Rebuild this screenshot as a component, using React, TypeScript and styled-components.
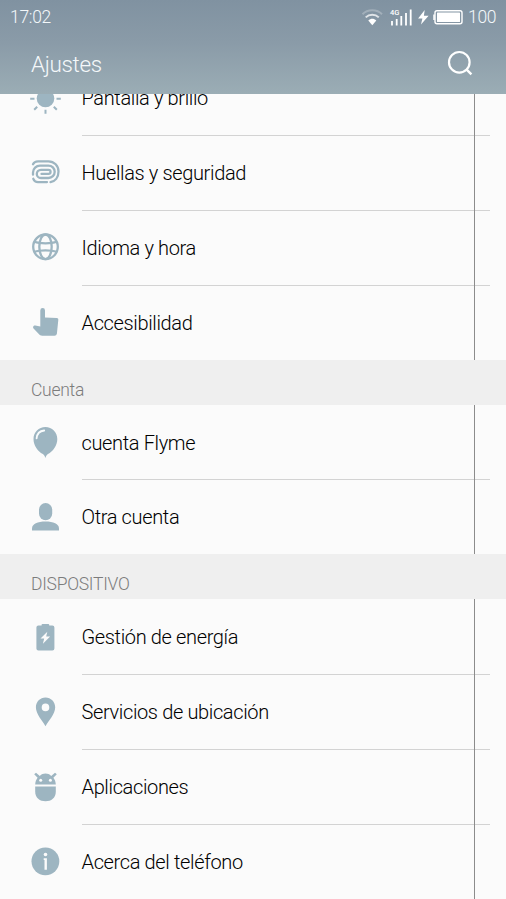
import React from "react";
import styled, { createGlobalStyle } from "styled-components";

const TINT = "#9db5c1";
const PAPER = "#fbfbfb";

const GlobalStyle = createGlobalStyle`
  * { box-sizing: border-box; }
  body { margin: 0; background: ${PAPER}; font-family: Roboto, "Liberation Sans", sans-serif; }
`;

const Screen = styled.div`
  display: flex;
  flex-direction: column;
  height: 899px;
  overflow: hidden;
  background: ${PAPER};
`;

const Header = styled.header`
  flex: none;
  height: 94px;
  color: #f4f8fa;
  background: linear-gradient(#8092a1, #8a9ba8 45%, #9badb5);
`;

const StatusBar = styled.div`
  display: flex;
  align-items: center;
  justify-content: space-between;
  height: 34px;
  padding: 0 10px;
  font-size: 17.5px;
  font-weight: 300;
  letter-spacing: -0.3px;
`;

const StatusIcons = styled.div`
  display: flex;
  align-items: center;
`;

const StatusSvg = styled.svg`
  display: block;
  width: 110px;
  height: 32px;
  letter-spacing: 0;
`;

const Level = styled.span`
  width: 28px;
  margin-left: -2px;
`;

const TitleBar = styled.div`
  display: flex;
  align-items: center;
  justify-content: space-between;
  height: 60px;
  padding: 0 30px 0 31px;
`;

const Title = styled.h1`
  margin: 0;
  font-size: 22.5px;
  line-height: 60px;
  font-weight: 300;
  letter-spacing: -0.35px;
`;

const SearchButton = styled.button`
  padding: 0;
  border: 0;
  background: none;
  color: inherit;
  svg { display: block; width: 30px; height: 30px; }
`;

const List = styled.main`
  flex: 1;
  min-height: 0;
  overflow: hidden;
`;

const Group = styled.section<{ $scrolled?: boolean }>`
  position: relative;
  margin-top: ${(p) => (p.$scrolled ? "-33.6px" : "0")};

  &::after {
    content: "";
    position: absolute;
    top: 0;
    bottom: 0;
    left: 474px;
    width: 1px;
    background: #8c8c8c;
  }
`;

const GroupTitle = styled.h2`
  height: 44.6px;
  margin: 0;
  padding: 8px 31px 0;
  background: #efefef;
  color: #7c7c7c;
  font-size: 17.5px;
  line-height: 44.4px;
  font-weight: 300;
  letter-spacing: -0.28px;
`;

const Row = styled.div`
  display: flex;
  height: 74.9px;
  padding: 0 16px 0 29px;
`;

const IconSlot = styled.svg`
  flex: none;
  width: 32px;
  height: 32px;
  margin: 21.2px 20.5px 0 0;
  color: ${TINT};
`;

const Label = styled.div<{ $first?: boolean }>`
  flex: 1;
  border-top: 1px solid ${(p) => (p.$first ? "transparent" : "#d3d3d3")};
  color: #000;
  font-size: 20px;
  font-weight: 350;
  letter-spacing: -0.36px;
  line-height: 75.6px;
`;

const stroke = { fill: "none", stroke: "currentColor" } as const;

const icons: Record<string, React.ReactNode> = {
  sun: (
    <>
      <circle cx="16.5" cy="16.5" r="8.8" fill="currentColor" />
      <path d="M1.200 16.700h4.300M27.500 16.700h4.300M16.500 27.800v4M5.200 27.700l3-3M27.800 27.700l-3-3M5.200 5.500l3 3M27.800 5.500l-3 3" {...stroke} strokeWidth="2" />
    </>
  ),
  finger: (
    <path
      d="M4 8.200C5 6.100 6.800 5.300 9 5.300h10.500a10 10 0 0 1 10 10.200c0 6-3.500 9.800-8 10.600M4 18.700v-2.200a7 7 0 0 1 7-6.900h8.500a6.200 6.200 0 0 1 0 12.400H12c-2.500 0-4.200-2-4.200-4.100s1.700-4.100 4.200-4.100h7.500a2.050 2.050 0 0 1 0 4.100H12.500M4.300 22.800c.9 2.300 2.400 3.300 4.700 3.300h9"
      {...stroke}
      strokeWidth="2.300"
      strokeLinecap="round"
    />
  ),
  globe: (
    <g {...stroke} strokeWidth="2.300">
      <circle cx="16.500" cy="15.800" r="12.300" />
      <ellipse cx="16.500" cy="15.800" rx="6.200" ry="12.300" />
      <path d="M5.500 10.800c5 2 17 2 22 0M5.500 20.800c5-2 17-2 22 0" />
    </g>
  ),
  hand: (
    <path
      d="M11.300 4.400a2.300 2.300 0 0 1 4.700 0v7.200l11.700.5c1.200.1 1.800.8 1.600 2l-1.400 13.600a2.500 2.500 0 0 1-2.500 2H13.200c-1.600 0-2.400-.5-3.400-1.600L4.800 22.800c-1.500-1.800-.3-3.700 1.600-3.300l4.900 1z"
      fill="currentColor"
    />
  ),
  balloon: (
    <>
      <path d="M16.400 1.100c6.600 0 11.900 5.200 11.900 11.800 0 6.700-4.500 12.300-9.300 15.200-.9.600-1.700 1.600-2.600 3.800-.9-2.200-1.700-3.200-2.600-3.800-4.800-2.900-9.300-8.500-9.300-15.200C4.500 6.300 9.800 1.100 16.400 1.100z" fill="currentColor" />
      <path d="M7.600 12.300c.4-4.300 3.300-7.300 7.600-7.800" fill="none" stroke="#f8fbfc" strokeWidth="1.800" strokeLinecap="round" />
    </>
  ),
  person: (
    <>
      <rect x="10" y="2" width="13.2" height="17.2" rx="6.6" fill="currentColor" />
      <path d="M3 29.400v-2c0-4.200 5.700-6.800 13.500-6.800S30 23.200 30 27.400v2z" fill="currentColor" />
    </>
  ),
  battery: (
    <>
      <path d="M12.600 5.500v-.7q0-.9.900-.9h5.800q.9 0 .9.900v.7h3.200q2 0 2 2v21q0 2-2 2h-14q-2 0-2-2v-21q0-2 2-2z" fill="currentColor" />
      <path d="M18.300 11.800l-6.800 6.600h3.700l-1.300 5.400 7.200-7.300h-3.900z" fill={PAPER} />
    </>
  ),
  pin: (
    <path
      d="M16.500 2.600c5.400 0 9.700 4.300 9.700 9.700 0 7-6.500 13.300-9.700 19C13.300 25.600 6.900 19.300 6.900 12.300c0-5.400 4.200-9.700 9.600-9.700zm0 6a3.800 3.800 0 1 0 0 7.600 3.800 3.800 0 0 0 0-7.600z"
      fill="currentColor"
      fillRule="evenodd"
    />
  ),
  android: (
    <>
      <path d="M6.200 16.500h20.600v5.300c0 6.200-4.600 9.500-10.300 9.500s-10.300-3.300-10.300-9.500z" fill="currentColor" />
      <path d="M6.200 14.600c0-2.800 1-5.200 2.400-6.900L5.200 4.300l1.800-1.500 3.800 3.100c3.200-3.200 8.200-3.200 11.400 0L26 2.800l1.800 1.500-3.400 3.400c1.400 1.700 2.400 4.100 2.400 6.900z" fill="currentColor" />
      <circle cx="11.700" cy="10.300" r="1.500" fill={PAPER} />
      <circle cx="21.400" cy="10.300" r="1.500" fill={PAPER} />
    </>
  ),
  info: (
    <>
      <circle cx="16.400" cy="16.300" r="13.900" fill="currentColor" />
      <circle cx="16.500" cy="9.500" r="1.800" fill={PAPER} />
      <path d="M14.700 13.200h3.200v11.500h-2.400v-9.700h-.8z" fill={PAPER} />
    </>
  ),
};

type Item = [icon: string, label: string];
const groups: { title?: string; items: Item[] }[] = [
  {
    items: [
      ["sun", "Pantalla y brillo"],
      ["finger", "Huellas y seguridad"],
      ["globe", "Idioma y hora"],
      ["hand", "Accesibilidad"],
    ],
  },
  {
    title: "Cuenta",
    items: [
      ["balloon", "cuenta Flyme"],
      ["person", "Otra cuenta"],
    ],
  },
  {
    title: "DISPOSITIVO",
    items: [
      ["battery", "Gestión de energía"],
      ["pin", "Servicios de ubicación"],
      ["android", "Aplicaciones"],
      ["info", "Acerca del teléfono"],
    ],
  },
];

const StatusGlyphs = () => (
  <StatusSvg viewBox="360 0 110 32">
    <g fill="none" stroke="#fff" strokeWidth="2">
      <path d="M362.500 13.300c5-5.300 14.500-5.300 19.500 0" opacity=".25" />
      <path d="M365.700 16.400c3.600-3.500 9.500-3.500 13.100 0" opacity=".75" />
    </g>
    <path d="M368.300 19.500c2.500-2.300 5.500-2.300 8 0l-4 4.700z" fill="#fff" />
    <text x="390" y="14" fontSize="7.500" fontWeight="500" fill="#fff">4G</text>
    <path d="M392 20v4.500M396.700 18v6.500M401.300 15v9.500M406 12v12.500M410.700 8.500v16" stroke="#fff" strokeWidth="1.800" />
    <path d="M424.700 9l-6.600 8.500h4.300l-1.400 6 7.600-8.700h-4.700z" fill="#fff" />
    <rect x="435" y="9.700" width="27" height="13" rx="2" fill="none" stroke="#fff" strokeWidth="1.400" />
    <rect x="437" y="11.500" width="23" height="9.400" rx=".5" fill="#fff" />
    <path d="M434 13.500v5.500" stroke="#fff" strokeWidth="1.500" />
  </StatusSvg>
);

export default function App() {
  return (
    <Screen>
      <GlobalStyle />
      <Header>
        <StatusBar>
          <span>17:02</span>
          <StatusIcons>
            <StatusGlyphs />
            <Level>100</Level>
          </StatusIcons>
        </StatusBar>
        <TitleBar>
          <Title>Ajustes</Title>
          <SearchButton aria-label="Buscar">
            <svg viewBox="446 49 30 30" fill="none" stroke="#fff" strokeWidth="2.200">
              <circle cx="459.300" cy="62.300" r="10.300" />
              <path d="M466.400 69.300l5 5" strokeWidth="2.400" />
            </svg>
          </SearchButton>
        </TitleBar>
      </Header>
      <List>
        {groups.map((group, g) => (
          <React.Fragment key={g}>
            {group.title && <GroupTitle>{group.title}</GroupTitle>}
            <Group $scrolled={g === 0}>
              {group.items.map(([icon, label], i) => (
                <Row key={label}>
                  <IconSlot viewBox="0 0 32 32">{icons[icon]}</IconSlot>
                  <Label $first={i === 0}>{label}</Label>
                </Row>
              ))}
            </Group>
          </React.Fragment>
        ))}
      </List>
    </Screen>
  );
}
